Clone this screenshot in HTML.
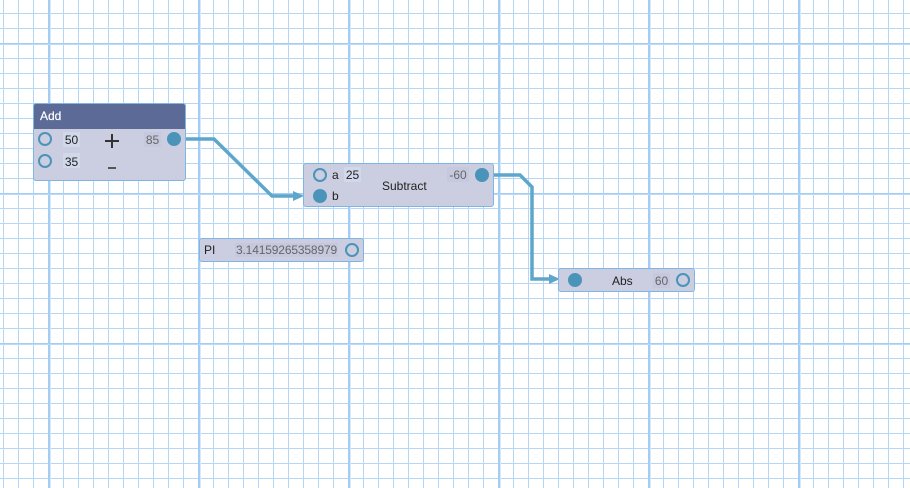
<!DOCTYPE html>
<html><head><meta charset="utf-8">
<style>
html,body{margin:0;padding:0;background:#fff}
#r{position:relative;width:910px;height:488px;overflow:hidden;background:#fff;font-family:"Liberation Sans",sans-serif;font-size:12px;color:#222}
#r svg{position:absolute;left:0;top:0}
.n{position:absolute;box-sizing:border-box;background:#cbcde0;border:1px solid #7fb5e2;border-radius:3px}
.t{position:absolute;line-height:15px;white-space:nowrap}
.v{position:absolute;height:15px;line-height:17px;text-align:center;background:#d0d8ea;color:#222;overflow:hidden}
.o{background:#c6c9de;color:#666}
.p{position:absolute;box-sizing:border-box;width:14px;height:14px;border-radius:50%;border:2px solid #4a94b9}
.f{background:#4a94b9}
</style></head><body><div id="r">
<svg width="910" height="488" xmlns="http://www.w3.org/2000/svg">
<defs>
<pattern id="a" x="3" y="0" width="15" height="488" patternUnits="userSpaceOnUse"><rect width="1" height="488" fill="#b5d6f5"/></pattern>
<pattern id="b" x="0" y="13" width="910" height="15" patternUnits="userSpaceOnUse"><rect width="910" height="1" fill="#b5d6f5"/></pattern>
<pattern id="c" x="48" y="0" width="150" height="488" patternUnits="userSpaceOnUse"><rect width="2" height="488" fill="#a3cdf3"/><rect x="2" width="1" height="488" fill="#d8e9fb"/></pattern>
<pattern id="d" x="0" y="43" width="910" height="150" patternUnits="userSpaceOnUse"><rect width="910" height="1" fill="#a3cdf3"/><rect y="1" width="910" height="1" fill="#bcdaf7"/></pattern>
</defs>
<rect width="910" height="488" fill="url(#a)"/>
<rect width="910" height="488" fill="url(#b)"/>
<rect width="910" height="488" fill="url(#c)"/>
<rect width="910" height="488" fill="url(#d)"/>
<g fill="none" stroke="#5ea6cc" stroke-width="3.5">
<path d="M186 139H214L272 196H296"/>
<path d="M494 175H520L532 187V279H552"/>
</g>
<path d="M293 191L304 196L293 201Z" fill="#5ea6cc"/>
<path d="M549 274L560 279L549 284Z" fill="#5ea6cc"/>
</svg>

<div class="n" style="left:33px;top:103px;width:153px;height:78px">
<div style="position:absolute;left:0;top:0;right:0;height:25px;background:#5c6a97;border-radius:2px 2px 0 0"></div>
<div class="t" style="left:6px;top:5px;color:#fff;font-size:12px;-webkit-text-stroke:.2px #fff">Add</div>
<div class="p" style="left:4px;top:28px"></div>
<div class="p" style="left:4px;top:50px"></div>
<div class="v" style="left:29px;top:28px;width:17px">50</div>
<div class="v" style="left:29px;top:49px;width:17px;line-height:18px">35</div>
<svg width="16" height="16" style="left:70px;top:29px"><path d="M1 8H15M8 1V15" stroke="#333" stroke-width="2" fill="none"/></svg>
<div style="position:absolute;left:74px;top:63px;width:8px;height:2px;background:#555"></div>
<div class="v o" style="left:110px;top:28px;width:17px">85</div>
<div class="p f" style="left:133px;top:28px"></div>
</div>

<div class="n" style="left:303px;top:163px;width:191px;height:44px">
<div class="p" style="left:9px;top:4px"></div>
<div class="p f" style="left:9px;top:25px"></div>
<div class="t" style="left:28px;top:4px">a</div>
<div class="t" style="left:28px;top:25px">b</div>
<div class="v" style="left:40px;top:3px;width:17px">25</div>
<div class="t" style="left:78px;top:15px">Subtract</div>
<div class="v o" style="left:143px;top:3px;width:22px">-60</div>
<div class="p f" style="left:171px;top:4px"></div>
</div>

<div class="n" style="left:199px;top:238px;width:165px;height:24px">
<div class="t" style="left:4px;top:4px">PI</div>
<div class="v o" style="left:35px;top:4px;width:103px;height:14px;line-height:15px;letter-spacing:-.15px">3.14159265358979</div>
<div class="p" style="left:145px;top:4px"></div>
</div>

<div class="n" style="left:558px;top:268px;width:137px;height:24px">
<div class="p f" style="left:9px;top:4px"></div>
<div class="t" style="left:53px;top:5px">Abs</div>
<div class="v o" style="left:94px;top:4px;width:17px">60</div>
<div class="p" style="left:117px;top:4px"></div>
</div>
</div></body></html>
